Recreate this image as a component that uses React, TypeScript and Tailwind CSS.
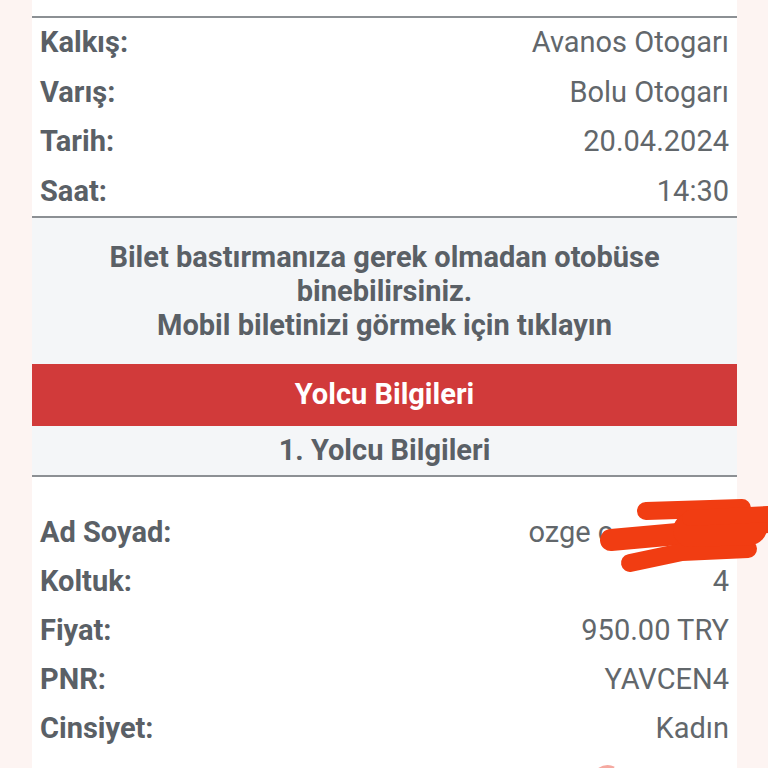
import React from 'react';

const tripRows = [
  { label: 'Kalkış:', value: 'Avanos Otogarı' },
  { label: 'Varış:', value: 'Bolu Otogarı' },
  { label: 'Tarih:', value: '20.04.2024' },
  { label: 'Saat:', value: '14:30' },
];

const passengerRows = [
  { label: 'Ad Soyad:', value: 'ozge c', hidden: true },
  { label: 'Koltuk:', value: '4' },
  { label: 'Fiyat:', value: '950.00 TRY' },
  { label: 'PNR:', value: 'YAVCEN4' },
  { label: 'Cinsiyet:', value: 'Kadın' },
];

function InfoRow({ label, value, tall, hidden }: { label: string; value: string; tall?: boolean; hidden?: boolean }) {
  return (
    <div className={tall ? 'flex items-center justify-between h-[49.5px] px-2' : 'flex items-center justify-between h-[49px] px-2'}>
      <span className="font-bold text-[#5a6066]">{label}</span>
      <span className={hidden ? 'text-[#62676b] pr-[116px]' : 'text-[#62676b]'}>{value}</span>
    </div>
  );
}

// karalama (isim gizleme)
function Scribble() {
  return (
    <svg className="absolute left-0 top-0 pointer-events-none" width="768" height="768" viewBox="0 0 768 768">
      <g stroke="#f13d12" strokeLinecap="round" strokeLinejoin="round" fill="none">
        <path d="M646 511 L742 508" strokeWidth="18" />
        <path d="M611 540 L700 532 L768 522" strokeWidth="22" />
        <path d="M630 563 L682 552 L748 549" strokeWidth="18" />
        <path d="M690 530 L750 528" strokeWidth="34" />
        <path d="M690 518 L768 514" strokeWidth="16" />
      </g>
      <path d="M598 770 Q606 764 614 768" stroke="#f5a9a0" strokeWidth="3" fill="none" />
    </svg>
  );
}

export default function App() {
  return (
    <div className="relative w-[768px] h-[768px] overflow-hidden bg-[#fdf4f2] font-['Roboto',sans-serif] text-[29px]">
      <div className="mx-[32px] w-[705px] h-full bg-white">
        <div className="h-[16px]" />
        <div className="border-t-2 border-b-2 border-[#8c9094]">
          {tripRows.map((r) => (
            <InfoRow key={r.label} {...r} tall />
          ))}
        </div>

        <div className="bg-[#f4f6f8] h-[146px] px-4 flex flex-col justify-center text-center font-bold text-[#5a6066] leading-[34px]">
          <p>Bilet bastırmanıza gerek olmadan otobüse binebilirsiniz.</p>
          <p>Mobil biletinizi görmek için tıklayın</p>
        </div>

        <div className="bg-[#d13a3a] h-[62px] flex items-center justify-center font-bold text-white">
          Yolcu Bilgileri
        </div>
        <div className="bg-[#f4f6f8] h-[51px] flex items-center justify-center font-bold text-[#5a6066] border-b-2 border-[#8c9094]">
          1. Yolcu Bilgileri
        </div>

        <div className="pt-[31.5px]">
          {passengerRows.map((r) => (
            <InfoRow key={r.label} {...r} />
          ))}
        </div>
      </div>
      <Scribble />
    </div>
  );
}
